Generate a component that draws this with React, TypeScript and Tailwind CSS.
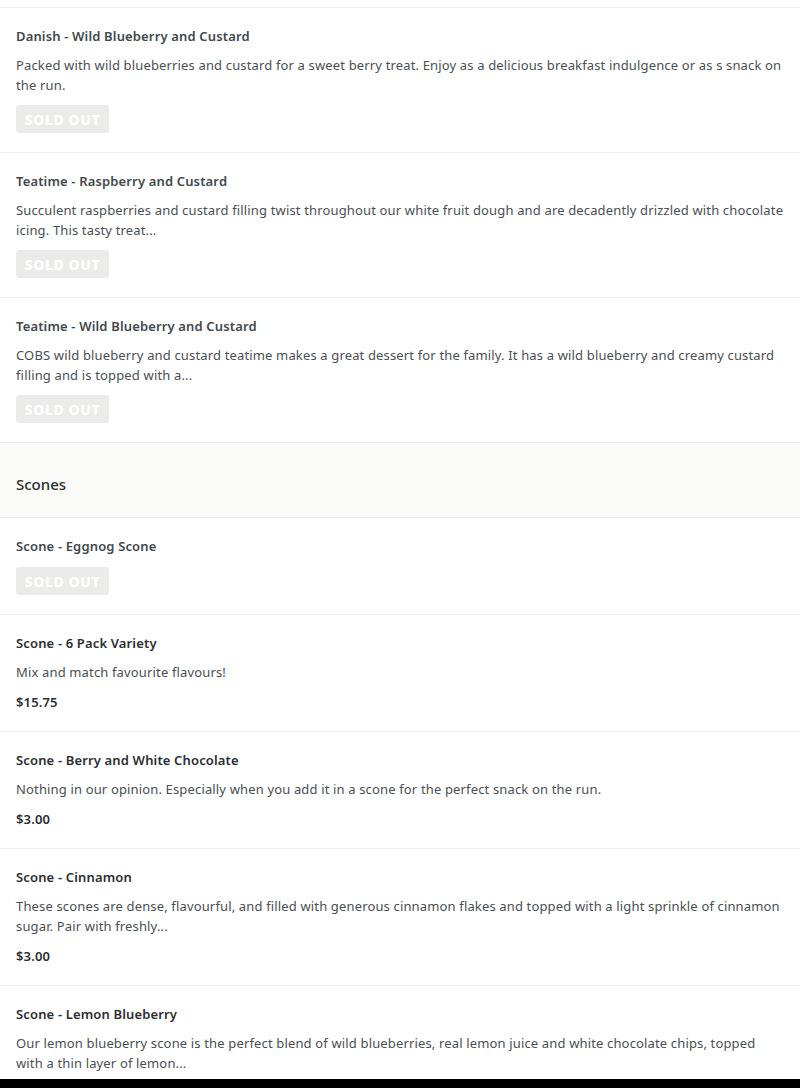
import React from 'react';

interface MenuItem {
  name: string;
  description?: string;
  price?: string;
  soldOut?: boolean;
}

const danishes: MenuItem[] = [
  {
    name: 'Danish - Wild Blueberry and Custard',
    description:
      'Packed with wild blueberries and custard for a sweet berry treat. Enjoy as a delicious breakfast indulgence or as s snack on the run.',
    soldOut: true,
  },
  {
    name: 'Teatime - Raspberry and Custard',
    description:
      'Succulent raspberries and custard filling twist throughout our white fruit dough and are decadently drizzled with chocolate icing. This tasty treat...',
    soldOut: true,
  },
  {
    name: 'Teatime - Wild Blueberry and Custard',
    description:
      'COBS wild blueberry and custard teatime makes a great dessert for the family. It has a wild blueberry and creamy custard filling and is topped with a...',
    soldOut: true,
  },
];

const scones: MenuItem[] = [
  { name: 'Scone - Eggnog Scone', soldOut: true },
  { name: 'Scone - 6 Pack Variety', description: 'Mix and match favourite flavours!', price: '$15.75' },
  {
    name: 'Scone - Berry and White Chocolate',
    description: 'Nothing in our opinion. Especially when you add it in a scone for the perfect snack on the run.',
    price: '$3.00',
  },
  {
    name: 'Scone - Cinnamon',
    description:
      'These scones are dense, flavourful, and filled with generous cinnamon flakes and topped with a light sprinkle of cinnamon sugar. Pair with freshly...',
    price: '$3.00',
  },
  {
    name: 'Scone - Lemon Blueberry',
    description:
      'Our lemon blueberry scone is the perfect blend of wild blueberries, real lemon juice and white chocolate chips, topped with a thin layer of lemon...',
    price: '$3.00',
  },
];

const ItemRow: React.FC<{ item: MenuItem }> = ({ item }) => (
  <div className="border-b border-[#ececea] px-4 pt-5 pb-[19px]">
    <p
      className={`text-[13px] font-semibold leading-4 tracking-[0.15px] ${
        item.soldOut ? 'text-[#3f484c]' : 'text-[#2b2e30]'
      }`}
    >
      {item.name}
    </p>
    {item.description && (
      <p className="mt-[11px] text-[13px] leading-5 tracking-[0.15px] text-[#4a4f53]">{item.description}</p>
    )}
    {item.soldOut ? (
      <div className={item.description ? 'mt-[10px]' : 'mt-[13px]'}>
        <span className="inline-flex h-7 w-[93px] items-center justify-center rounded-[3px] bg-[#ebebe9] text-[14px] font-extrabold tracking-[0.6px] text-white">
          SOLD OUT
        </span>
      </div>
    ) : (
      <p className="mt-[10px] text-[13px] font-semibold leading-5 tracking-[0.15px] text-[#2b2e30]">{item.price}</p>
    )}
  </div>
);

export default function App() {
  return (
    <div className="min-h-screen bg-white" style={{ fontFamily: '"Noto Sans", sans-serif' }}>
      <div className="h-2 border-b border-[#ececea]" />
      {danishes.map((item) => (
        <ItemRow key={item.name} item={item} />
      ))}
      <div className="border-b border-[#ececea] bg-[#fafaf8] px-4 pt-[31px] pb-[23px]">
        <h2 className="text-[15px] font-medium leading-5 text-[#2b2e30]">Scones</h2>
      </div>
      {scones.map((item) => (
        <ItemRow key={item.name} item={item} />
      ))}
      <div className="fixed bottom-0 left-0 h-[9px] w-full bg-black" />
    </div>
  );
}
